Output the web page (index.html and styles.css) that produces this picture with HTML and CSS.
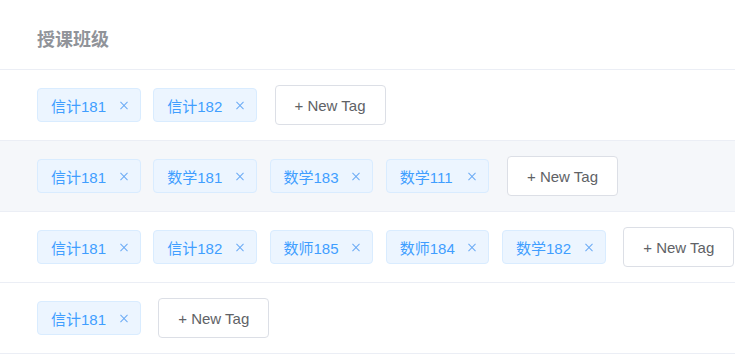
FILE: index.html
```html
<!DOCTYPE html>
<html lang="zh-CN">
  <head>
    <meta charset="UTF-8" />
    <meta name="viewport" content="width=device-width, initial-scale=1.0" />
    <title>授课班级</title>
    <link rel="stylesheet" href="styles.css">
  </head>
  <body>
    <div class="table">
      <div class="row head">
        <div class="cell">授课班级</div>
      </div>
      <div class="row">
        <div class="cell">
          <span class="tag">信计181<i class="close"></i></span>
          <span class="tag">信计182<i class="close"></i></span>
          <button class="btn-new">+ New Tag</button>
        </div>
      </div>
      <div class="row striped">
        <div class="cell">
          <span class="tag">信计181<i class="close"></i></span>
          <span class="tag">数学181<i class="close"></i></span>
          <span class="tag">数学183<i class="close"></i></span>
          <span class="tag">数学111<i class="close"></i></span>
          <button class="btn-new">+ New Tag</button>
        </div>
      </div>
      <div class="row">
        <div class="cell">
          <span class="tag">信计181<i class="close"></i></span>
          <span class="tag">信计182<i class="close"></i></span>
          <span class="tag">数师185<i class="close"></i></span>
          <span class="tag">数师184<i class="close"></i></span>
          <span class="tag">数学182<i class="close"></i></span>
          <button class="btn-new">+ New Tag</button>
        </div>
      </div>
      <div class="row">
        <div class="cell">
          <span class="tag">信计181<i class="close"></i></span>
          <button class="btn-new">+ New Tag</button>
        </div>
      </div>
    </div>
  </body>
</html>
```

FILE: styles.css
```css
* {
  margin: 0;
  padding: 0;
  box-sizing: border-box;
}

body {
  background: #fff;
  font-family: "Liberation Sans", "Noto Sans CJK SC", sans-serif;
  overflow: hidden;
}

.table {
  width: 100%;
}

.row {
  height: 71px;
  border-bottom: 1px solid #ebeef5;
  display: flex;
  align-items: center;
}

.row.head {
  height: 70px;
  align-items: flex-start;
}

.row.striped {
  background: #f5f7fa;
}

.cell {
  padding-left: 37px;
  display: flex;
  align-items: center;
  white-space: nowrap;
}

.head .cell {
  padding-top: 28px;
  font-size: 18px;
  line-height: 24px;
  font-weight: bold;
  color: #909399;
}

.tag {
  width: 103.5px;
  height: 34px;
  display: inline-flex;
  align-items: center;
  padding: 0 0 0 13px;
  margin-right: 12.75px;
  font-size: 15px;
  color: #409eff;
  background: #ecf5ff;
  border: 1px solid #d9ecff;
  border-radius: 4px;
  flex-shrink: 0;
}

.close {
  width: 16px;
  height: 16px;
  margin-left: auto;
  margin-right: 8px;
  position: relative;
}

.close::before,
.close::after {
  content: "";
  position: absolute;
  left: 3px;
  top: 7.5px;
  width: 10px;
  height: 1px;
  background: #6aaaf5;
  transform: rotate(45deg);
}

.close::after {
  transform: rotate(-45deg);
}

.btn-new {
  height: 40px;
  padding: 0 19px;
  margin-left: 5px;
  font-family: inherit;
  font-size: 15px;
  color: #606266;
  background: #fff;
  border: 1px solid #dcdfe6;
  border-radius: 4px;
  flex-shrink: 0;
}
```
